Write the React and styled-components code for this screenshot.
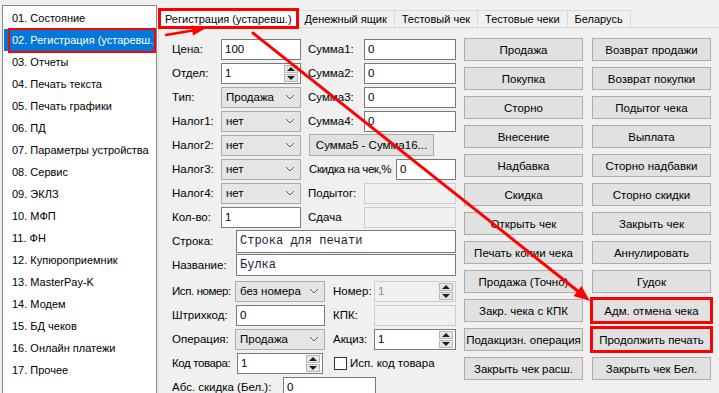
import React from "react";
import styled, { createGlobalStyle, css } from "styled-components";

const GlobalStyle = createGlobalStyle`
  html, body { margin: 0; padding: 0; background: #f0f0f0; }
  body {
    font-family: "Liberation Sans", Arial, sans-serif;
    font-size: 11.5px;
    color: #000;
  }
  * { box-sizing: border-box; }
`;

const RED = "#ff0000";

const Window = styled.div`
  position: relative;
  width: 719px;
  height: 393px;
  overflow: hidden;
  display: flex;
  background: #f0f0f0;
`;

const Sidebar = styled.aside`
  width: 158px;
  flex-shrink: 0;
  padding: 5px 0 0 2px;
`;

const ListBox = styled.ul`
  margin: 0;
  padding: 1px 0 0;
  list-style: none;
  width: 155px;
  height: 400px;
  background: #fff;
  border: 1px solid #828790;
  font-size: 11px;
`;

const ListItem = styled.li`
  position: relative;
  height: 22px;
  line-height: 22px;
  padding-left: 8px;
  margin: 0 2px 0 1px;
  white-space: nowrap;
  ${(p) =>
    p.$selected &&
    css`
      background: #0078d7;
      color: #fff;
    `}
  ${(p) =>
    p.$marked &&
    css`
      &::after {
        content: "";
        position: absolute;
        left: 4px;
        right: -2px;
        top: -1px;
        bottom: -2px;
        border: 2.5px solid ${RED};
      }
    `}
`;

const ItemText = styled.span`
  display: block;
  overflow: hidden;
  width: 100%;
`;

const Main = styled.main`
  flex: 1;
  min-width: 0;
  display: flex;
  flex-direction: column;
`;

const TabStrip = styled.div`
  flex-shrink: 0;
  display: flex;
  align-items: flex-end;
  height: 27px;
  padding-left: 1px;
  font-size: 11px;
`;

const Tab = styled.div`
  height: 17px;
  line-height: 16px;
  padding: 0 7px;
  border: 1px solid #d9d9d9;
  border-bottom: none;
  margin-left: -1px;
  background: #f0f0f0;
  white-space: nowrap;
  ${(p) =>
    p.$active &&
    css`
      height: 19px;
      line-height: 18px;
      padding: 0 5px;
      margin-left: 0;
      margin-bottom: -1px;
      background: #fff;
      position: relative;
      z-index: 1;
    `}
  ${(p) =>
    p.$marked &&
    css`
      outline: 3px solid ${RED};
      outline-offset: -2px;
    `}
`;

const Panel = styled.section`
  flex: 1;
  display: flex;
  gap: 8px;
  margin-right: -4px;
  padding: 9px 0 0 13px;
  border: 1px solid #d9d9d9;
  background: #f0f0f0;
`;

const Form = styled.div`
  width: 284px;
  flex-shrink: 0;
  display: flex;
  flex-direction: column;
`;

const TopGrid = styled.div`
  display: grid;
  grid-template-columns: 49px 80px 63px 92px;
  grid-auto-rows: 24px;
  align-items: center;
`;

const BottomGrid = styled.div`
  display: grid;
  grid-template-columns: 63px 90px 49px 82px;
  grid-auto-rows: 24px;
  align-items: center;
  margin-top: 2px;
`;

const WideRow = styled.div`
  display: grid;
  grid-template-columns: 64px 1fr;
  height: 24px;
  align-items: center;
`;

const Label = styled.span`
  white-space: nowrap;
  padding-left: ${(p) => p.$indent || 0}px;
  ${(p) => p.$w && `width: ${p.$w}px; flex-shrink: 0;`}
  ${(p) => p.$tight && `letter-spacing: -0.4px;`}
`;

const field = css`
  height: ${(p) => p.$h || 21}px;
  display: flex;
  align-items: center;
  padding: 0 2px 0 3px;
  white-space: nowrap;
  overflow: hidden;
`;

const TextBox = styled.div`
  ${field}
  background: ${(p) => (p.$disabled ? "#f0f0f0" : "#fff")};
  border: 1px solid ${(p) => (p.$disabled ? "#cccccc" : "#7a7a7a")};
  color: ${(p) => (p.$disabled ? "#8d8d8d" : "#000")};
  ${(p) => p.$w && `width: ${p.$w}px; flex-shrink: 0;`}
  ${(p) => p.$ml && `margin-left: ${p.$ml}px;`}
  ${(p) =>
    p.$mono &&
    css`
      font-family: "Liberation Mono", "Courier New", monospace;
      font-size: 12px;
      color: #1c1c3c;
    `}
`;

const Value = styled.span`
  flex: 1;
`;

const SelectBox = styled.div`
  ${field}
  justify-content: space-between;
  padding: 0 5px 0 4px;
  background: #e5e5e5;
  border: 1px solid #acacac;
`;

const Spinner = styled.div`
  width: 14px;
  height: 17px;
  display: flex;
  flex-direction: column;
  gap: 1px;
  flex-shrink: 0;
`;

const SpinHalf = styled.div`
  flex: 1;
  display: flex;
  align-items: center;
  justify-content: center;
  background: #e6e6e6;
  border: 1px solid #b5b5b5;
  &::before {
    content: "";
    border-left: 4px solid transparent;
    border-right: 4px solid transparent;
    ${(p) =>
      p.$down
        ? `border-top: 4px solid #1e1e1e;`
        : `border-bottom: 4px solid #1e1e1e;`}
  }
`;

const Button = styled.div`
  height: ${(p) => p.$h || 23}px;
  display: flex;
  align-items: center;
  justify-content: center;
  background: #e1e1e1;
  border: 1px solid #adadad;
  white-space: nowrap;
  ${(p) => p.$w && `width: ${p.$w}px;`}
  ${(p) => p.$span && `grid-column: ${p.$span};`}
  ${(p) => p.$ml && `margin-left: ${p.$ml}px;`}
  ${(p) =>
    p.$marked &&
    css`
      outline: 3px solid ${RED};
      outline-offset: -1px;
    `}
`;

const Inline = styled.div`
  display: flex;
  align-items: center;
  grid-column: ${(p) => p.$span || "auto"};
  padding-left: ${(p) => p.$indent || 0}px;
`;

const CheckBox = styled.span`
  width: 13px;
  height: 13px;
  border: 1px solid #333;
  background: #fff;
  margin-right: 3px;
  flex-shrink: 0;
`;

const ButtonGrid = styled.div`
  display: grid;
  grid-template-columns: 119px 119px;
  grid-auto-rows: 23px;
  column-gap: 9px;
  row-gap: 6px;
  margin-top: 1px;
  align-content: start;
`;

const Overlay = styled.svg`
  position: absolute;
  inset: 0;
  pointer-events: none;
  z-index: 5;
`;

const Chevron = () => (
  <svg width="10" height="6" viewBox="0 0 10 6">
    <path d="M1 1l4 4 4-4" fill="none" stroke="#606060" strokeWidth="1" />
  </svg>
);

function Select({ value }) {
  return (
    <SelectBox>
      <span>{value}</span>
      <Chevron />
    </SelectBox>
  );
}

function SpinInput({ value, disabled, w, ml }) {
  return (
    <TextBox $disabled={disabled} $w={w} $ml={ml}>
      <Value>{value}</Value>
      <Spinner>
        <SpinHalf />
        <SpinHalf $down />
      </Spinner>
    </TextBox>
  );
}

const menu = [
  "01. Состояние",
  "02. Регистрация (устаревш.)",
  "03. Отчеты",
  "04. Печать текста",
  "05. Печать графики",
  "06. ПД",
  "07. Параметры устройства",
  "08. Сервис",
  "09. ЭКЛЗ",
  "10. МФП",
  "11. ФН",
  "12. Купюроприемник",
  "13. MasterPay-K",
  "14. Модем",
  "15. БД чеков",
  "16. Онлайн платежи",
  "17. Прочее",
];

const tabs = ["Регистрация (устаревш.)", "Денежный ящик", "Тестовый чек", "Тестовые чеки", "Беларусь"];

const buttons = [
  ["Продажа", "Возврат продажи"],
  ["Покупка", "Возврат покупки"],
  ["Сторно", "Подытог чека"],
  ["Внесение", "Выплата"],
  ["Надбавка", "Сторно надбавки"],
  ["Скидка", "Сторно скидки"],
  ["Открыть чек", "Закрыть чек"],
  ["Печать копии чека", "Аннулировать"],
  ["Продажа (Точно)", "Гудок"],
  ["Закр. чека с КПК", "Адм. отмена чека"],
  ["Подакцизн. операция", "Продолжить печать"],
  ["Закрыть чек расш.", "Закрыть чек Бел."],
];

const marked = ["Адм. отмена чека", "Продолжить печать"];

export default function App() {
  return (
    <>
      <GlobalStyle />
      <Window>
        <Sidebar>
          <ListBox>
            {menu.map((m, i) => (
              <ListItem key={m} $selected={i === 1} $marked={i === 1}>
                <ItemText>{m}</ItemText>
              </ListItem>
            ))}
          </ListBox>
        </Sidebar>

        <Main>
          <TabStrip>
            {tabs.map((t, i) => (
              <Tab key={t} $active={i === 0} $marked={i === 0}>
                {t}
              </Tab>
            ))}
          </TabStrip>

          <Panel>
            <Form>
              <TopGrid>
                <Label>Цена:</Label>
                <TextBox>100</TextBox>
                <Label $indent={7}>Сумма1:</Label>
                <TextBox>0</TextBox>

                <Label>Отдел:</Label>
                <SpinInput value="1" />
                <Label $indent={7}>Сумма2:</Label>
                <TextBox>0</TextBox>

                <Label>Тип:</Label>
                <Select value="Продажа" />
                <Label $indent={7}>Сумма3:</Label>
                <TextBox>0</TextBox>

                <Label>Налог1:</Label>
                <Select value="нет" />
                <Label $indent={7}>Сумма4:</Label>
                <TextBox>0</TextBox>

                <Label>Налог2:</Label>
                <Select value="нет" />
                <Button $span="3 / 5" $w={125} $h={22} $ml={8}>
                  Сумма5 - Сумма16...
                </Button>

                <Label>Налог3:</Label>
                <Select value="нет" />
                <Inline $span="3 / 5" $indent={8}>
                  <Label $w={87} $tight>Скидка на чек,%</Label>
                  <TextBox $w={60}>0</TextBox>
                </Inline>

                <Label>Налог4:</Label>
                <Select value="нет" />
                <Label $indent={7}>Подытог:</Label>
                <TextBox $disabled />

                <Label>Кол-во:</Label>
                <TextBox>1</TextBox>
                <Label $indent={7}>Сдача</Label>
                <TextBox $disabled />
              </TopGrid>

              <WideRow>
                <Label>Строка:</Label>
                <TextBox $mono $h={23}>Строка для печати</TextBox>
              </WideRow>
              <WideRow>
                <Label>Название:</Label>
                <TextBox $mono $h={22}>Булка</TextBox>
              </WideRow>

              <BottomGrid>
                <Label $tight>Исп. номер:</Label>
                <Select value="без номера" />
                <Label $indent={8}>Номер:</Label>
                <SpinInput value="1" disabled />

                <Label>Штрихкод:</Label>
                <TextBox $ml={1}>0</TextBox>
                <Label $indent={8}>КПК:</Label>
                <TextBox $disabled />

                <Label>Операция:</Label>
                <Select value="Продажа" />
                <Label $indent={8}>Акциз:</Label>
                <SpinInput value="1" />

                <Label $tight>Код товара:</Label>
                <SpinInput value="1" w={86} ml={2} />
                <Inline $span="3 / 5" $indent={9}>
                  <CheckBox />
                  <span>Исп. код товара</span>
                </Inline>

                <Inline $span="1 / -1">
                  <Label $w={111}>Абс. скидка (Бел.):</Label>
                  <TextBox $w={93}>0</TextBox>
                </Inline>
              </BottomGrid>
            </Form>

            <ButtonGrid>
              {buttons.flat().map((b) => (
                <Button key={b} $marked={marked.includes(b)}>
                  {b}
                </Button>
              ))}
            </ButtonGrid>
          </Panel>
        </Main>

        <Overlay width="719" height="393" viewBox="0 0 719 393">
          <line x1="166" y1="35" x2="194" y2="30.3" stroke={RED} strokeWidth="2.5" strokeLinecap="round" />
          <polygon points="206,28 193.1,35.5 191.3,25.3" fill={RED} />
          <line x1="253" y1="33" x2="579" y2="292" stroke={RED} strokeWidth="3" strokeLinecap="round" />
          <polygon points="590,301 573.6,296 581.4,286" fill={RED} />
        </Overlay>
      </Window>
    </>
  );
}
